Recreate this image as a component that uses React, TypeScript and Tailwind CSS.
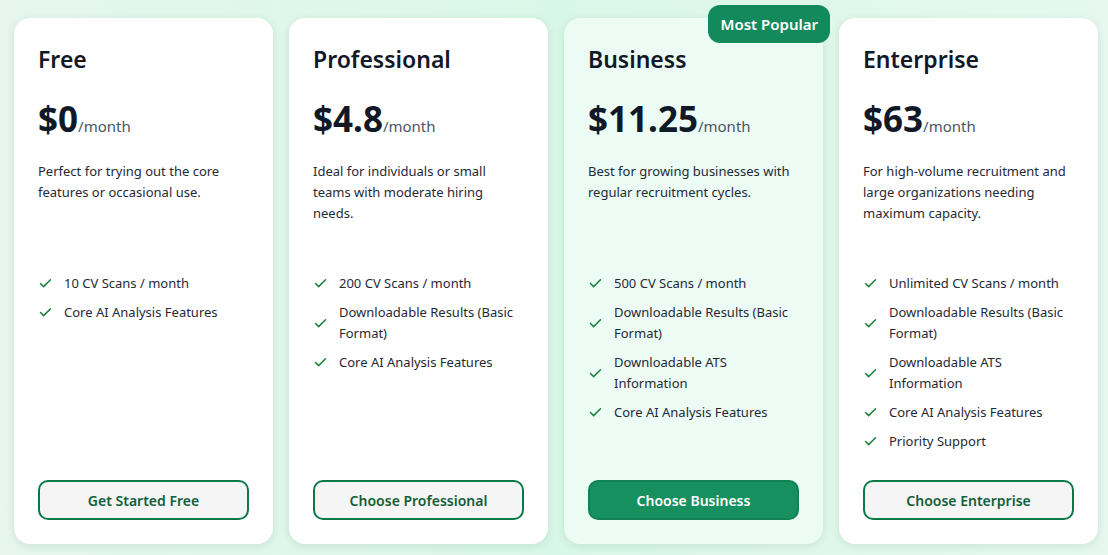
import { Check } from 'lucide-react'

type Plan = {
  name: string
  price: string
  description: string
  features: string[]
  cta: string
  popular?: boolean
}

const plans: Plan[] = [
  {
    name: 'Free',
    price: '$0',
    description: 'Perfect for trying out the core features or occasional use.',
    features: ['10 CV Scans / month', 'Core AI Analysis Features'],
    cta: 'Get Started Free',
  },
  {
    name: 'Professional',
    price: '$4.8',
    description: 'Ideal for individuals or small teams with moderate hiring needs.',
    features: ['200 CV Scans / month', 'Downloadable Results (Basic Format)', 'Core AI Analysis Features'],
    cta: 'Choose Professional',
  },
  {
    name: 'Business',
    price: '$11.25',
    description: 'Best for growing businesses with regular recruitment cycles.',
    features: [
      '500 CV Scans / month',
      'Downloadable Results (Basic Format)',
      'Downloadable ATS Information',
      'Core AI Analysis Features',
    ],
    cta: 'Choose Business',
    popular: true,
  },
  {
    name: 'Enterprise',
    price: '$63',
    description: 'For high-volume recruitment and large organizations needing maximum capacity.',
    features: [
      'Unlimited CV Scans / month',
      'Downloadable Results (Basic Format)',
      'Downloadable ATS Information',
      'Core AI Analysis Features',
      'Priority Support',
    ],
    cta: 'Choose Enterprise',
  },
]

function PlanCard({ plan }: { plan: Plan }) {
  return (
    <div
      className={
        'relative flex flex-col rounded-2xl px-6 pt-[25px] pb-6 shadow-[0_2px_8px_rgba(16,80,50,0.12)] ' +
        (plan.popular ? 'bg-[#ecfcf4]' : 'bg-white')
      }
    >
      {plan.popular && (
        <span className="absolute -top-[13px] -right-[7px] rounded-xl bg-[#138a5c] px-3 py-[7px] text-[15px] leading-[24px] font-semibold text-white">
          Most Popular
        </span>
      )}
      <h3 className="text-[23px] leading-8 font-semibold text-[#111827]">{plan.name}</h3>
      <div className="mt-6 flex items-baseline">
        <span className="text-[35px] leading-10 font-bold text-[#111827]">{plan.price}</span>
        <span className="text-[15px] text-[#4b5563]">/month</span>
      </div>
      <p className="mt-[22px] min-h-[84px] text-[13px] leading-[21px] text-[#1f2937]">{plan.description}</p>
      <ul className="mt-[28px] flex flex-col gap-2">
        {plan.features.map((f) => (
          <li key={f} className="flex items-center gap-[11px] text-[13px] leading-[21px] text-[#1f2937]">
            <Check className="h-[15px] w-[15px] shrink-0 text-[#16803c]" strokeWidth={2.3} />
            <span>{f}</span>
          </li>
        ))}
      </ul>
      <button
        className={
          'mt-auto h-[40px] w-full rounded-[10px] border-2 text-[14px] font-semibold ' +
          (plan.popular
            ? 'border-[#128256] bg-[#16905f] text-white'
            : 'border-[#0c7a48] bg-[#f5f5f5] text-[#125f3c]')
        }
      >
        {plan.cta}
      </button>
    </div>
  )
}

export default function App() {
  return (
    <div
      className="h-[555px] w-[1108px] bg-gradient-to-r from-[#e6f6ee] via-[#d9f7e8] to-[#e6f8ef] pt-[18px] pr-[10px] pb-[11px] pl-[14px]"
      style={{ fontFamily: '"Noto Sans", "Open Sans", sans-serif' }}
    >
      <div className="grid h-full grid-cols-4 gap-4">
        {plans.map((p) => (
          <PlanCard key={p.name} plan={p} />
        ))}
      </div>
    </div>
  )
}
